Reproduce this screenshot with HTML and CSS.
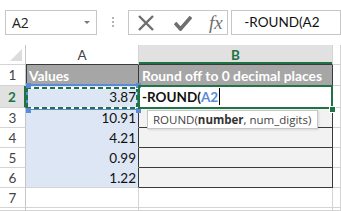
FILE: index.html
```html
<!DOCTYPE html>
<html>
<head>
    <title>ROUND formula</title>
    <link rel="stylesheet" href="styles.css">
</head>
<body>
    <div class="formula-bar">
        <div class="name-box"><span>A2</span><span class="caret"></span></div>
        <div class="grip"><i></i><i></i><i></i></div>
        <div class="fx-buttons">
            <svg class="btn-x" width="18" height="16" viewBox="0 0 18 16">
                <path d="M2 1 L16 15 M16 1 L2 15" stroke="#6e6e6e" stroke-width="2.4" fill="none"/>
            </svg>
            <svg class="btn-ok" width="18" height="16" viewBox="0 0 18 16">
                <path d="M1 8 L6.5 14 L17 2" stroke="#6e6e6e" stroke-width="3.6" fill="none"/>
            </svg>
            <span class="fx">fx</span>
        </div>
        <div class="formula-input">-ROUND(A2</div>
    </div>

    <div class="sheet">
        <div class="c corner"><span class="tri"></span></div>
        <div class="c ch dark-bottom">A</div>
        <div class="c ch dark-bottom sel">B</div>
        <div class="c ch"></div>

        <div class="c rh">1</div>
        <div class="c title first">Values</div>
        <div class="c title">Round off to 0 decimal places</div>
        <div class="c"></div>

        <div class="c rh sel">2</div>
        <div class="c val ref">
            3.87
            <div class="ref-box"></div>
            <div class="ants"></div>
            <i class="handle tl"></i><i class="handle tr"></i><i class="handle bl"></i><i class="handle br"></i>
        </div>
        <div class="c edit">
            <span class="fn">-ROUND(<span class="arg">A2</span></span><span class="cursor"></span>
            <div class="active"></div>
            <i class="fill-handle"></i>
            <div class="tip">ROUND(<b>number</b>, num_digits)</div>
        </div>
        <div class="c"></div>

        <div class="c rh">3</div>
        <div class="c val">10.91</div>
        <div class="c boxed"></div>
        <div class="c"></div>

        <div class="c rh">4</div>
        <div class="c val">4.21</div>
        <div class="c boxed"></div>
        <div class="c"></div>

        <div class="c rh">5</div>
        <div class="c val">0.99</div>
        <div class="c boxed"></div>
        <div class="c"></div>

        <div class="c rh">6</div>
        <div class="c val last">1.22</div>
        <div class="c boxed"></div>
        <div class="c"></div>

        <div class="c rh">7</div>
        <div class="c"></div>
        <div class="c"></div>
        <div class="c"></div>

        <div class="c rh"></div>
        <div class="c"></div>
        <div class="c"></div>
        <div class="c"></div>
    </div>
</body>
</html>
```

FILE: styles.css
```css
body { margin: 0; width: 341px; height: 211px; overflow: hidden; background: #fff; font-family: Lato, "Liberation Sans", sans-serif; }

/* formula bar */
.formula-bar { display: flex; align-items: flex-start; height: 45px; padding-top: 10px; box-sizing: border-box; white-space: nowrap; }
.name-box { display: flex; align-items: center; width: 101px; height: 25px; margin-left: 5px; padding-left: 6px; border: 1px solid #c6c6c6; box-sizing: border-box; font: 14px "Open Sans", sans-serif; color: #222; }
.caret { margin-left: auto; margin-right: 6px; width: 0; height: 0; border-left: 3px solid transparent; border-right: 3px solid transparent; border-top: 3px solid #7a7a7a; }
.grip { display: flex; flex-direction: column; gap: 2px; margin-left: 15px; margin-top: 7px; }
.grip i { display: block; width: 2px; height: 2px; background: #b4b4b4; }
.fx-buttons { display: flex; align-items: center; width: 110px; height: 25px; margin-left: 14px; padding-left: 8px; border: 1px solid #c6c6c6; box-sizing: border-box; }
.btn-ok { margin-left: 19px; }
.fx { margin-left: 17px; font: italic 19px "Liberation Serif", serif; color: #6e6e6e; line-height: 20px; }
.formula-input { width: 120px; height: 25px; margin-left: 3px; padding-left: 12px; border: 1px solid #c6c6c6; box-sizing: border-box; font-size: 13.5px; line-height: 23px; color: #111; }

/* sheet */
.sheet { display: grid; grid-template-columns: 26px 113px 194px 8px; grid-template-rows: 20px 21px 22px repeat(5, 20px) 3px; }
.c { position: relative; display: flex; align-items: center; padding: 0 2px; box-sizing: border-box; border-right: 1px solid #d4d4d4; border-bottom: 1px solid #d4d4d4; font-size: 13.5px; color: #111; white-space: nowrap; }
.corner { border-right-color: #c6c6c6; }
.tri { position: absolute; right: 3px; bottom: 3px; width: 0; height: 0; border-left: 12px solid transparent; border-bottom: 12px solid #dcdcdc; }
.ch { justify-content: center; color: #444; }
.ch.dark-bottom { border-bottom-color: #3a3a3a; }
.ch.sel { background: #e1e1e1; color: #217346; font-weight: bold; box-shadow: inset 0 -2px 0 #217346; }
.rh { justify-content: center; color: #444; border-right-color: #c6c6c6; }
.rh.sel { background: #e1e1e1; color: #217346; font-weight: bold; border-right: 2px solid #217346; }

.title { background: #a6a6a6; color: #fff; font-weight: bold; font-size: 13.8px; border-color: #3a3a3a; padding-left: 3px; }
.title.first { box-shadow: inset 1px 0 0 #3a3a3a; }

.val { justify-content: flex-end; background: #dce6f4; border-right-color: #3a3a3a; border-bottom-color: #dce6f4; padding-right: 2px; }
.val.last { border-bottom-color: #d4d4d4; }
.boxed { background: #f2f2f2; border-color: #3a3a3a; }

/* reference highlight on A2 */
.ref { z-index: 2; }
.ref-box { position: absolute; left: 0; top: -2px; width: 113px; height: 26px; border: 2px solid #5b8ad8; box-sizing: border-box; }
.ants { position: absolute; left: 0; top: 1px; width: 112px; height: 22px;
    background:
        repeating-linear-gradient(90deg, #217346 0 5px, #fff 5px 8px) top / 100% 2px no-repeat,
        repeating-linear-gradient(90deg, #217346 0 5px, #fff 5px 8px) bottom / 100% 2px no-repeat,
        repeating-linear-gradient(180deg, #217346 0 5px, transparent 5px 8px) left / 2px 100% no-repeat,
        repeating-linear-gradient(180deg, #217346 0 5px, transparent 5px 8px) right / 2px 100% no-repeat; }
.handle { position: absolute; width: 5px; height: 5px; background: #5b8ad8; }
.handle.tl { left: 0; top: -3px; }
.handle.tr { left: 110px; top: -3px; }
.handle.bl { left: 0; top: 22px; }
.handle.br { left: 110px; top: 22px; }

/* cell being edited */
.edit { z-index: 3; border-color: #3a3a3a; padding-left: 3px; }
.fn { font-weight: bold; color: #111; }
.arg { color: #5b8ad8; }
.cursor { display: inline-block; width: 1px; height: 17px; margin-left: 1px; background: #000; }
.active { position: absolute; left: -1px; top: -1px; width: 195px; height: 24px; border: 2px solid #217346; box-sizing: border-box; }
.fill-handle { position: absolute; left: 190px; top: 20px; width: 5px; height: 5px; background: #217346; border: 1px solid #fff; }
.tip { position: absolute; left: 8px; top: 24px; width: 171px; height: 19px; padding-left: 5px; box-sizing: border-box; border: 1px solid #c6c6c6; background: #fff; box-shadow: 1px 1px 2px rgba(0, 0, 0, 0.12); font: 11.5px "Open Sans", sans-serif; line-height: 17px; color: #444; }
.tip b { color: #333; }
```
